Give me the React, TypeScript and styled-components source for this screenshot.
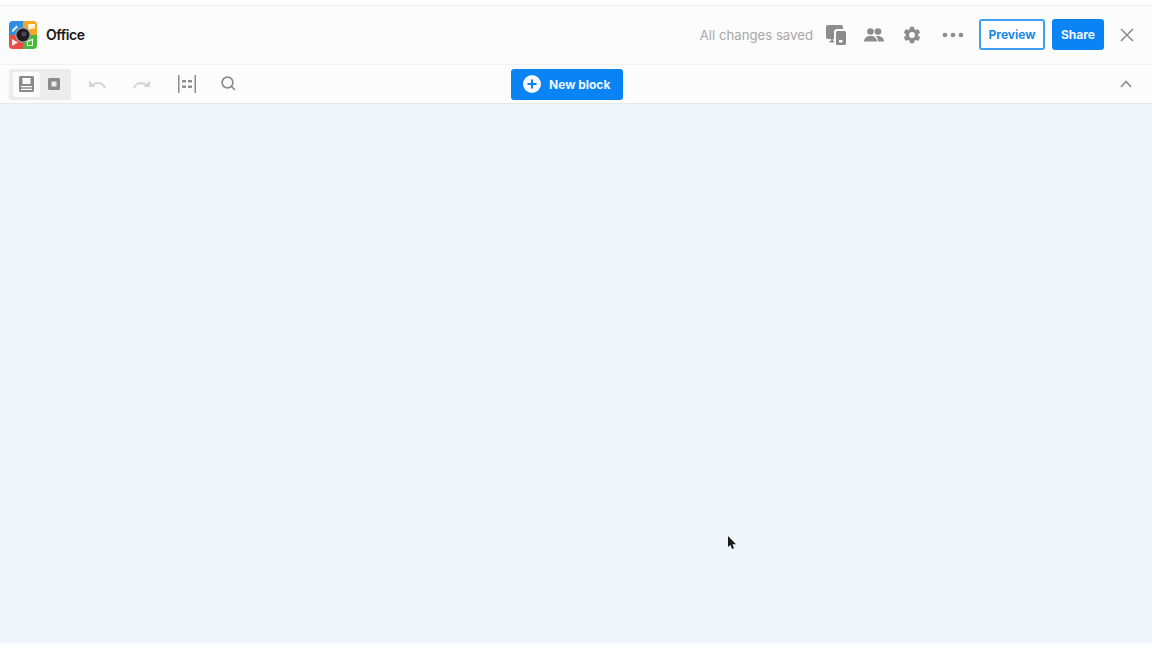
import React from "react";
import styled, { createGlobalStyle } from "styled-components";

const Global = createGlobalStyle`
  html, body { margin: 0; padding: 0; background: #ffffff; }
  body { font-family: Inter, "Noto Sans", "Liberation Sans", sans-serif; overflow: hidden; }
`;

const Page = styled.div`
  width: 1152px;
  height: 648px;
  display: flex;
  flex-direction: column;
  position: relative;
  overflow: hidden;
`;
const TopStrip = styled.div`
  height: 5px;
  background: #ffffff;
  border-bottom: 1px solid #f0f0f0;
`;
const Header = styled.header`
  height: 59px;
  box-sizing: border-box;
  display: flex;
  align-items: center;
  padding: 0 18px 1px 9px;
  background: #fcfcfc;
  border-bottom: 1px solid #f1f1f1;
`;
const Brand = styled.div`
  display: flex;
  align-items: center;
  gap: 9px;
`;
const Title = styled.span`
  font-size: 14px;
  font-weight: 600;
  color: #1a1a1a;
  letter-spacing: -0.45px;
`;
const Actions = styled.div`
  margin-left: auto;
  display: flex;
  align-items: center;
`;
const Saved = styled.span`
  font-size: 13.2px;
  color: #a8a8a8;
  margin-right: 13px;
  white-space: nowrap;
`;
const IconSlot = styled.span<{ $w: number; $mr: number }>`
  display: flex;
  align-items: center;
  justify-content: center;
  width: ${p => p.$w}px;
  margin-right: ${p => p.$mr}px;
  color: #8c8c8c;
`;
const Button = styled.button<{ $primary?: boolean; $w: number; $mr: number }>`
  width: ${p => p.$w}px;
  height: 31px;
  margin-right: ${p => p.$mr}px;
  padding: 0;
  border-radius: 3px;
  border: ${p => (p.$primary ? "0" : "2px solid #3f9ff0")};
  background: ${p => (p.$primary ? "#0a84f5" : "#ffffff")};
  color: ${p => (p.$primary ? "#f2f8ff" : "#1a88ea")};
  font-family: inherit;
  font-size: 12px;
  font-weight: 700;
`;
const Toolbar = styled.div`
  height: 39px;
  box-sizing: border-box;
  display: flex;
  align-items: center;
  padding: 0 20px 0 9px;
  background: #fcfcfc;
  border-bottom: 1px solid #e6e8ea;
`;
const Segments = styled.div`
  width: 62px;
  height: 31px;
  box-sizing: border-box;
  padding: 3px 4px;
  display: flex;
  background: #ececec;
  border-radius: 2px;
`;
const Segment = styled.span<{ $active?: boolean }>`
  width: 27px;
  height: 25px;
  display: flex;
  align-items: center;
  justify-content: center;
  border-radius: 3px;
  color: #8a8a8a;
  background: ${p => (p.$active ? "#fbfbfb" : "transparent")};
`;
const ToolIcons = styled.div`
  width: 440px;
  display: flex;
  align-items: center;
  padding: 0 0 1px 17px;
  box-sizing: border-box;
`;
const ToolIcon = styled.span<{ $mr: number; $color: string }>`
  display: flex;
  margin-right: ${p => p.$mr}px;
  color: ${p => p.$color};
`;
const NewBlock = styled.button`
  width: 112px;
  height: 31px;
  padding: 0 0 0 12px;
  display: flex;
  align-items: center;
  gap: 8px;
  border: 0;
  border-radius: 3px;
  background: #0a84f5;
  color: #eef6ff;
  font-family: inherit;
  font-size: 12px;
  font-weight: 700;
  white-space: nowrap;
`;
const Collapse = styled.span`
  margin-left: auto;
  padding-bottom: 1px;
  display: flex;
  color: #8c8c8c;
`;
const Canvas = styled.main`
  flex: 1;
  background: #eef6fc;
`;
const BottomStrip = styled.div`
  height: 5px;
  background: #fdfefe;
`;
const Cursor = styled.svg`
  position: absolute;
  left: 727px;
  top: 536px;
`;

const Logo = () => (
  <svg width="28" height="28" viewBox="0 0 28 28">
    <defs>
      <clipPath id="lg"><rect width="28" height="28" rx="4" /></clipPath>
    </defs>
    <g clipPath="url(#lg)">
      <rect width="14" height="14" fill="#2c8fe0" />
      <rect x="14" width="14" height="14" fill="#f5a623" />
      <rect y="14" width="14" height="14" fill="#ea4b43" />
      <rect x="14" y="14" width="14" height="14" fill="#46b93c" />
    </g>
    <path d="M3 9l4.500-4.500 1.500 1.500-4.500 4.500L3 11z" fill="#dff0ff" />
    <path d="M19 3h7v4.500h-3.500L20 9.500v-2h-1z" fill="#fff3dc" />
    <path d="M3 18l6 3.500L3 25z" fill="#ffe9e6" />
    <path d="M18.500 24.500v-4l5-2v6h-5z" fill="none" stroke="#e6ffe0" strokeWidth="1.200" />
    <circle cx="14" cy="14" r="7.800" fill="#a0a0a0" />
    <circle cx="14" cy="14" r="6.500" fill="#1e1e20" />
    <circle cx="15" cy="13" r="2.500" fill="#4a4a4e" />
  </svg>
);

const Devices = () => (
  <svg width="20" height="20" viewBox="0 0 20 20" fill="currentColor">
    <path d="M2 0h13a2 2 0 0 1 2 2v2h-6a3 3 0 0 0-3 3v7H7v2h1v1.500H3.500V16H5v-2H2a2 2 0 0 1-2-2V2a2 2 0 0 1 2-2z" />
    <path fillRule="evenodd" d="M11.500 6h7A1.500 1.500 0 0 1 20 7.500v11a1.500 1.500 0 0 1-1.500 1.500h-7a1.500 1.500 0 0 1-1.500-1.500v-11A1.500 1.500 0 0 1 11.500 6zM13 15v2.500h3.500V15z" />
  </svg>
);
const People = () => (
  <svg width="20" height="14" viewBox="0 0 20 14" fill="currentColor">
    <circle cx="6.500" cy="3.500" r="3.300" />
    <circle cx="14" cy="3.500" r="3.300" />
    <path d="M0 13.500c0-3.500 3-5.500 6.500-5.500s6.500 2 6.500 5.500z" />
    <path d="M14 13.500h6c0-3.200-2.500-5.500-6-5.500-.7 0-1.400.1-2 .3 1.300 1.200 2 3 2 5.200z" />
  </svg>
);
const Gear = () => (
  <svg width="20" height="20" viewBox="0 0 24 24" fill="currentColor">
    <path d="M19.400 13c.04-.33.1-.66.1-1s-.06-.67-.1-1l2.100-1.650c.2-.15.25-.42.12-.64l-2-3.460c-.12-.22-.4-.3-.6-.22l-2.500 1c-.52-.4-1.080-.73-1.700-.98l-.37-2.650A.506.506 0 0 0 14 2h-4c-.25 0-.46.18-.5.42l-.37 2.650c-.62.25-1.180.59-1.700.98l-2.500-1c-.22-.08-.48 0-.6.22l-2 3.460c-.13.22-.07.49.12.64L4.570 11c-.04.33-.07.66-.07 1s.03.67.07 1l-2.100 1.650c-.2.15-.25.42-.12.64l2 3.460c.12.22.4.3.6.22l2.500-1c.52.4 1.080.73 1.700.98l.37 2.650c.04.24.25.42.5.42h4c.25 0 .46-.18.5-.42l.37-2.650c.62-.25 1.180-.59 1.700-.98l2.500 1c.22.08.48 0 .6-.22l2-3.460c.13-.22.07-.49-.12-.64L19.400 13zM12 15.500a3.500 3.500 0 1 1 0-7 3.500 3.500 0 0 1 0 7z" />
  </svg>
);
const Dots = () => (
  <svg width="22" height="6" viewBox="0 0 22 6" fill="currentColor">
    <circle cx="3" cy="3" r="2.300" />
    <circle cx="11" cy="3" r="2.300" />
    <circle cx="19" cy="3" r="2.300" />
  </svg>
);
const Close = () => (
  <svg width="14" height="14" viewBox="0 0 14 14" fill="none" stroke="currentColor" strokeWidth="1.600">
    <path d="M1 1l12 12M13 1L1 13" />
  </svg>
);
const PageBlock = () => (
  <svg width="15" height="16" viewBox="0 0 15 16" fill="currentColor">
    <path fillRule="evenodd" d="M1.500 0h12A1.500 1.500 0 0 1 15 1.500v13a1.500 1.500 0 0 1-1.500 1.500h-12A1.500 1.500 0 0 1 0 14.500v-13A1.500 1.500 0 0 1 1.500 0zM3.500 2v6h8V2zM2 10v1.200h11V10zM2 12.800V14h11v-1.200z" />
  </svg>
);
const SmallBlock = () => (
  <svg width="12" height="12" viewBox="0 0 12 12" fill="currentColor">
    <path fillRule="evenodd" d="M1.500 0h9A1.500 1.500 0 0 1 12 1.500v9a1.500 1.500 0 0 1-1.500 1.500h-9A1.500 1.500 0 0 1 0 10.500v-9A1.500 1.500 0 0 1 1.500 0zM3.500 3.500v5h5v-5z" />
  </svg>
);
const Undo = () => (
  <svg width="18" height="10" viewBox="0 0 18 10" fill="none" stroke="currentColor" strokeWidth="2">
    <path d="M17 9c-1.500-3.500-4-5-7-5-2.500 0-4.500 1-6.500 3" />
    <path d="M1 1.500V8h6.500z" fill="currentColor" stroke="none" />
  </svg>
);
const Redo = () => (
  <svg width="18" height="10" viewBox="0 0 18 10" fill="none" stroke="currentColor" strokeWidth="2">
    <path d="M1 9c1.500-3.500 4-5 7-5 2.500 0 4.500 1 6.500 3" />
    <path d="M17 1.500V8h-6.500z" fill="currentColor" stroke="none" />
  </svg>
);
const Spacing = () => (
  <svg width="18" height="18" viewBox="0 0 18 18" fill="currentColor">
    <rect x="0" y="0" width="1.500" height="18" />
    <rect x="16.500" y="0" width="1.500" height="18" />
    <rect x="4" y="5" width="4" height="2.400" />
    <rect x="10" y="5" width="4" height="2.400" />
    <rect x="4" y="10.500" width="4" height="2.400" />
    <rect x="10" y="10.500" width="4" height="2.400" />
  </svg>
);
const Search = () => (
  <svg width="15" height="15" viewBox="0 0 15 15" fill="none" stroke="currentColor" strokeWidth="1.700">
    <circle cx="6.500" cy="6.500" r="5.400" />
    <path d="M10.500 10.500L14 14" />
  </svg>
);
const Plus = () => (
  <svg width="18" height="18" viewBox="0 0 18 18">
    <circle cx="9" cy="9" r="9" fill="#f4f9ff" />
    <path d="M9 4.500v9M4.500 9h9" stroke="#0a84f5" strokeWidth="2" />
  </svg>
);
const Chevron = () => (
  <svg width="12" height="8" viewBox="0 0 12 8" fill="none" stroke="currentColor" strokeWidth="1.600">
    <path d="M1 7l5-5.500L11 7" />
  </svg>
);

export default function App() {
  return (
    <Page>
      <Global />
      <TopStrip />
      <Header>
        <Brand>
          <Logo />
          <Title>Office</Title>
        </Brand>
        <Actions>
          <Saved>All changes saved</Saved>
          <IconSlot $w={20} $mr={18}><Devices /></IconSlot>
          <IconSlot $w={20} $mr={18}><People /></IconSlot>
          <IconSlot $w={20} $mr={20}><Gear /></IconSlot>
          <IconSlot $w={22} $mr={15}><Dots /></IconSlot>
          <Button $w={66} $mr={7}>Preview</Button>
          <Button $primary $w={52} $mr={16}>Share</Button>
          <IconSlot $w={14} $mr={0}><Close /></IconSlot>
        </Actions>
      </Header>
      <Toolbar>
        <Segments>
          <Segment $active><PageBlock /></Segment>
          <Segment><SmallBlock /></Segment>
        </Segments>
        <ToolIcons>
          <ToolIcon $mr={27} $color="#d4d4d4"><Undo /></ToolIcon>
          <ToolIcon $mr={27} $color="#d4d4d4"><Redo /></ToolIcon>
          <ToolIcon $mr={25} $color="#8c8c8c"><Spacing /></ToolIcon>
          <ToolIcon $mr={0} $color="#8c8c8c"><Search /></ToolIcon>
        </ToolIcons>
        <NewBlock><Plus />New block</NewBlock>
        <Collapse><Chevron /></Collapse>
      </Toolbar>
      <Canvas />
      <BottomStrip />
      <Cursor width="9" height="14" viewBox="0 0 9 14">
        <path d="M1 0v11l2.500-2 1.500 4 2-.8-1.600-3.900H9z" fill="#1a1a1a" />
      </Cursor>
    </Page>
  );
}
